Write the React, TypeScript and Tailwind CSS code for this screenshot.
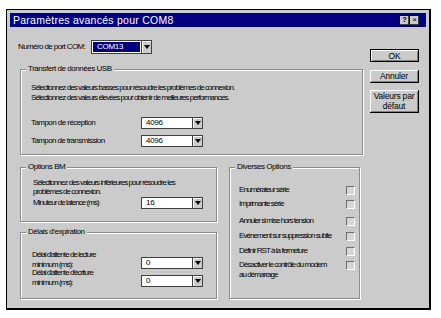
import React from "react";

const FONT = "font-['Liberation_Sans',Arial,sans-serif] tracking-[-0.95px]";

function Arrow() {
  return (
    <div className="flex w-[10px] items-center justify-center border-l border-[#404040] bg-[#cbcbcb] shadow-[inset_1px_1px_0_#fff]">
      <svg width="6" height="5" viewBox="0 0 6 5">
        <path d="M0 0H6L3 4Z" fill="#000" />
      </svg>
    </div>
  );
}

function Combo({ value, width }: { value: string; width: string }) {
  return (
    <div className={`flex h-[12px] shrink-0 border border-[#404040] bg-white ${width}`}>
      <div className="flex flex-1 items-center pl-[4px] text-[8px] leading-none tracking-[-0.3px] text-black">{value}</div>
      <Arrow />
    </div>
  );
}

function Group({ label, className, children }: { label: string; className: string; children?: React.ReactNode }) {
  return (
    <div className={`relative border border-[#8a8a8a] shadow-[inset_1px_1px_0_#fff,1px_1px_0_#fff] ${className}`}>
      <span className="absolute left-[5px] top-[-6px] bg-[#cbcbcb] px-[2px] text-[8px] leading-[10px] tracking-[-0.45px]">{label}</span>
      {children}
    </div>
  );
}

function Check() {
  return <div className="h-[9px] w-[9px] shrink-0 border border-t-[#6e6e6e] border-l-[#6e6e6e] border-b-white border-r-white bg-[#d6d6d6]" />;
}

function Btn({ children, className }: { children: React.ReactNode; className: string }) {
  return (
    <div className={`flex items-center justify-center text-center text-[8.5px] leading-[10px] tracking-[-0.2px] shadow-[inset_1px_1px_0_#fff,inset_-1px_-1px_0_#808080] ${className}`}>
      {children}
    </div>
  );
}

const options: [string, string][] = [
  ["Enumérateur série", "mt-[17px]"],
  ["Imprimante série", "mt-[4px]"],
  ["Annuler si mise hors tension", "mt-[7px]"],
  ["Evénement sur suppression subite", "mt-[5px]"],
  ["Définir RST à la fermeture", "mt-[5px]"],
];

export default function App() {
  return (
    <div className={`h-[318px] w-[441px] bg-white pl-[6px] pt-[9px] text-black ${FONT}`}>
      <div className="h-[301px] w-[425px] border-b-2 border-l border-r-2 border-t border-black bg-[#cbcbcb] px-[3px] pt-[3px]">
        <div className="flex h-[14px] items-center justify-between bg-[#000080] pl-[3px] pr-[7px]">
          <span className="text-[10.5px] leading-none tracking-[0.25px] text-white">Paramètres avancés pour COM8</span>
          <div className="flex gap-[1px] tracking-normal">
            <div className="flex h-[9px] w-[9px] items-center justify-center bg-[#cbcbcb] text-[8px] font-bold leading-none shadow-[inset_-1px_-1px_0_#404040]">?</div>
            <div className="flex h-[9px] w-[9px] items-center justify-center bg-[#cbcbcb] text-[8px] leading-none shadow-[inset_-1px_-1px_0_#404040]">×</div>
          </div>
        </div>

        <div className="flex pl-[10px] pt-[13px]">
          <div className="w-[343px]">
            <div className="-ml-[2px] flex h-[14px] items-center">
              <span className="w-[73px] text-[8px] leading-none tracking-[-0.6px]">Numéro de port COM:</span>
              <div className="flex h-[14px] w-[61px] border border-[#404040] bg-white">
                <div className="m-[1px] flex flex-1 items-center bg-[#000080] pl-[4px] text-[8px] leading-none tracking-[-0.3px] text-white">COM13</div>
                <Arrow />
              </div>
            </div>

            <Group label="Transfert de données USB" className="mt-[15px] h-[86px] pl-[10px] pt-[13px]">
              <div className="text-[8px] leading-[10px]">
                <p>Sélectionnez des valeurs basses pour résoudre les problèmes de connexion.</p>
                <p>Sélectionnez des valeurs élevées pour obtenir de meilleures performances.</p>
              </div>
              <div className="mt-[14px] flex items-center">
                <span className="w-[110px] text-[8px] leading-none tracking-[-0.55px]">Tampon de réception</span>
                <Combo value="4096" width="w-[62px]" />
              </div>
              <div className="mt-[6px] flex items-center">
                <span className="w-[110px] text-[8px] leading-none tracking-[-0.6px]">Tampon de transmission</span>
                <Combo value="4096" width="w-[62px]" />
              </div>
            </Group>

            <div className="mt-[12px] flex">
              <div className="w-[197px]">
                <Group label="Options BM" className="h-[55px] pl-[12px] pt-[10px]">
                  <div className="text-[8px] leading-[9px]">
                    <p>Sélectionnez des valeurs inférieures pour résoudre les</p>
                    <p>problèmes de connexion.</p>
                  </div>
                  <div className="mt-[1px] flex items-center">
                    <span className="w-[108px] text-[8px] leading-none">Minuteur de latence (ms)</span>
                    <Combo value="16" width="w-[62px]" />
                  </div>
                </Group>
                <Group label="Délais d'expiration" className="mt-[10px] h-[67px] pl-[11px] pt-[17px]">
                  <div className="flex items-start">
                    <div className="w-[109px] text-[8px] leading-[10px]">
                      <p>Délai d'attente de lecture</p>
                      <p>minimum (ms):</p>
                    </div>
                    <div className="mt-[7px]">
                      <Combo value="0" width="w-[62px]" />
                    </div>
                  </div>
                  <div className="-mt-[2px] flex items-start">
                    <div className="w-[109px] text-[8px] leading-[10px]">
                      <p>Délai d'attente d'écriture</p>
                      <p>minimum (ms):</p>
                    </div>
                    <div className="mt-[7px]">
                      <Combo value="0" width="w-[62px]" />
                    </div>
                  </div>
                </Group>
              </div>

              <Group label="Diverses Options" className="ml-[12px] h-[132px] w-[131px] pl-[9px] pr-[4px]">
                {options.map(([text, mt]) => (
                  <div key={text} className={`flex h-[10px] items-center justify-between ${mt}`}>
                    <span className="text-[8px] leading-none">{text}</span>
                    <Check />
                  </div>
                ))}
                <div className="mt-[4px] flex items-start justify-between">
                  <div className="text-[8px] leading-[10px]">
                    <p>Désactiver le contrôle du modem</p>
                    <p>au démarrage</p>
                  </div>
                  <div className="mt-[1px]">
                    <Check />
                  </div>
                </div>
              </Group>
            </div>
          </div>

          <div className="ml-[7px] w-[49px]">
            <Btn className="mt-[9px] h-[13px] border border-black">OK</Btn>
            <Btn className="mt-[8px] h-[13px] border-b border-r border-black">Annuler</Btn>
            <Btn className="mt-[7px] h-[23px] border-b border-r border-black">
              Valeurs par
              <br />
              défaut
            </Btn>
          </div>
        </div>
      </div>
    </div>
  );
}
